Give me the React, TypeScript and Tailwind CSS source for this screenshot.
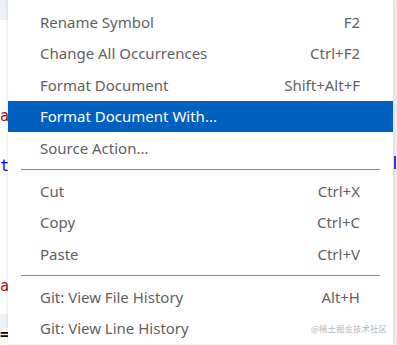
import React from "react";

type Item = { label: string; keys?: string; active?: boolean } | "sep";

const items: Item[] = [
  { label: "Rename Symbol", keys: "F2" },
  { label: "Change All Occurrences", keys: "Ctrl+F2" },
  { label: "Format Document", keys: "Shift+Alt+F" },
  { label: "Format Document With...", active: true },
  { label: "Source Action..." },
  "sep",
  { label: "Cut", keys: "Ctrl+X" },
  { label: "Copy", keys: "Ctrl+C" },
  { label: "Paste", keys: "Ctrl+V" },
  "sep",
  { label: "Git: View File History", keys: "Alt+H" },
  { label: "Git: View Line History" },
];

export default function App() {
  return (
    <div
      className="relative h-[345px] w-[397px] overflow-hidden bg-white"
      style={{ fontFamily: '"Noto Sans", "Open Sans", sans-serif' }}
    >
      {/* editor behind the menu */}
      <div className="flex h-full flex-col text-[15px] leading-[20px]" style={{ fontFamily: '"DejaVu Sans Mono", monospace' }}>
        <div className="h-[20px] w-full bg-[#eef1f7]" />
        <div className="mt-[86px] text-[#a31515]">a</div>
        <div className="mt-[30px] text-[#0000ff]">t</div>
        <div className="mt-[100px] text-[#a31515]">a</div>
        <div className="mt-[18px] h-[14px] w-full bg-[#eef1f7]" />
        <div className="text-black leading-[12px] font-bold">=</div>
      </div>

      {/* right gutter */}
      <div className="absolute right-0 top-0 h-full w-[4px] bg-[#eceef2]">
        <div className="mt-[156px] ml-[1px] h-[13px] w-[2px] bg-[#3b3bd6]" />
      </div>

      {/* context menu */}
      <div className="absolute left-[8px] top-0 flex w-[385px] flex-col bg-white pt-[6.25px] text-[15px] text-[#616161] shadow-[0_0_4px_rgba(0,0,0,0.12)]">
        {items.map((it, i) =>
          it === "sep" ? (
            <div key={i} className="flex h-[11.5px] items-center px-[13px]">
              <div className="h-px w-full bg-[#8c8c8c]" />
            </div>
          ) : (
            <div
              key={i}
              className={
                "flex h-[31.5px] items-center justify-between pl-[32px] pr-[33px] " +
                (it.active ? "bg-[#0060c0] text-white" : "")
              }
            >
              <span>{it.label}</span>
              {it.keys && <span>{it.keys}</span>}
            </div>
          )
        )}
      </div>

      <div
        className="absolute bottom-[10px] right-[10px] text-[8.5px] text-[#b8b8b8]"
        style={{ fontFamily: '"Noto Sans CJK SC", sans-serif' }}
      >
        @稀土掘金技术社区
      </div>
    </div>
  );
}
